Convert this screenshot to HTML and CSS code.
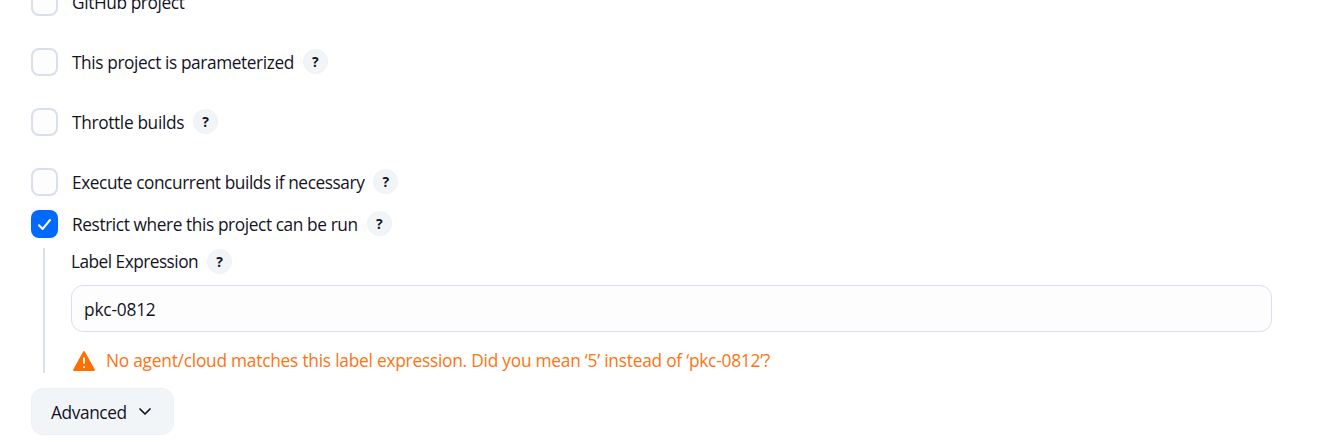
FILE: index.html
```
<!DOCTYPE html>
<html lang="en">
<head>
<meta charset="utf-8">
<title>Project configuration</title>
<link rel="stylesheet" href="styles.css">
</head>
<body>
<main class="form">
  <div class="option"><span class="checkbox"></span><span class="label">GitHub project</span></div>
  <div class="option"><span class="checkbox"></span><span class="label">This project is parameterized</span><span class="help">?</span></div>
  <div class="option"><span class="checkbox"></span><span class="label label-throttle">Throttle builds</span><span class="help">?</span></div>
  <div class="option option-tight"><span class="checkbox"></span><span class="label label-concurrent">Execute concurrent builds if necessary</span><span class="help">?</span></div>
  <div class="option option-last"><span class="checkbox checked"><svg width="27" height="28" viewBox="0 0 27 28"><path d="M8 15.2l3.6 3.8L19 10" fill="none" stroke="#fff" stroke-width="2" stroke-linecap="round" stroke-linejoin="round"/></svg></span><span class="label">Restrict where this project can be run</span><span class="help">?</span></div>
  <section class="nested">
    <div class="field-title"><span class="label label-expression">Label Expression</span><span class="help">?</span></div>
    <div class="input"><span class="label label-value">pkc-0812</span></div>
    <div class="warning">
      <svg width="22" height="20" viewBox="0 0 22 20"><path d="M11 1L21 19H1Z" fill="#fe6e00" stroke="#fe6e00" stroke-width="1.8" stroke-linejoin="round"/><path d="M11 6.5v6.3M11 15.2v1.8" stroke="#fff" stroke-width="1.9"/></svg>
      <span class="label label-warning">No agent/cloud matches this label expression. Did you mean ‘5’ instead of ‘pkc-0812’?</span>
    </div>
  </section>
  <div class="advanced"><span class="label">Advanced</span><svg width="14" height="10" viewBox="0 0 14 10"><path d="M2 2l5 5 5-5" fill="none" stroke="#14141f" stroke-width="1.7" stroke-linecap="round" stroke-linejoin="round"/></svg></div>
</main>
</body>
</html>
```
FILE: styles.css
```
* { box-sizing: border-box; }
html, body { margin: 0; height: 442px; overflow: hidden; background: #fff; }
body { font-family: "Open Sans", "Noto Sans", sans-serif; font-size: 17.3px; line-height: 24px; color: #14141f; }
svg { display: block; flex: none; }
.form { margin-top: -12px; padding-left: 31px; }
.option { display: flex; align-items: center; height: 28px; margin-bottom: 32px; }
.option-tight { margin-bottom: 14px; }
.option-last { margin-bottom: 10px; }
.checkbox { flex: none; width: 27px; height: 28px; margin-right: 14px; border: 2px solid #dadfec; border-radius: 8px; background: #fdfdfe; }
.checked { border: 0; background: #006aff; }
.label { white-space: nowrap; letter-spacing: -0.4px; }
.option .label, .advanced .label { padding-top: 2px; }
.label-throttle { letter-spacing: -0.34px; }
.label-concurrent { letter-spacing: -0.43px; }
.label-expression { letter-spacing: -0.53px; }
.label-value { letter-spacing: -0.18px; }
.label-warning { letter-spacing: -0.22px; }
.help { flex: none; width: 25px; height: 25px; margin: 0 0 1px 9px; border: 1px solid #edf1f6; border-radius: 50%; background: #f2f5f8; font-size: 14px; font-weight: 700; line-height: 23px; text-align: center; }
.nested { width: 1229px; height: 125px; margin-left: 12px; padding-left: 26px; border-left: 2px solid #dadfec; border-radius: 1px; }
.field-title { display: flex; align-items: center; height: 27px; }
.input { display: flex; align-items: center; height: 47px; margin-top: 10px; padding: 3px 12px 0; border: 1px solid #dadfec; border-radius: 12px; background: #fdfdfe; }
.warning { display: flex; align-items: center; gap: 11px; height: 24px; margin: 17px 0 0 2px; color: #fe7310; }
.advanced { display: flex; align-items: center; gap: 11px; width: 143px; height: 47px; margin-top: 15px; padding: 1px 0 0 19px; border: 1px solid #edf1f6; border-radius: 12px; background: #f2f5f8; }
```
